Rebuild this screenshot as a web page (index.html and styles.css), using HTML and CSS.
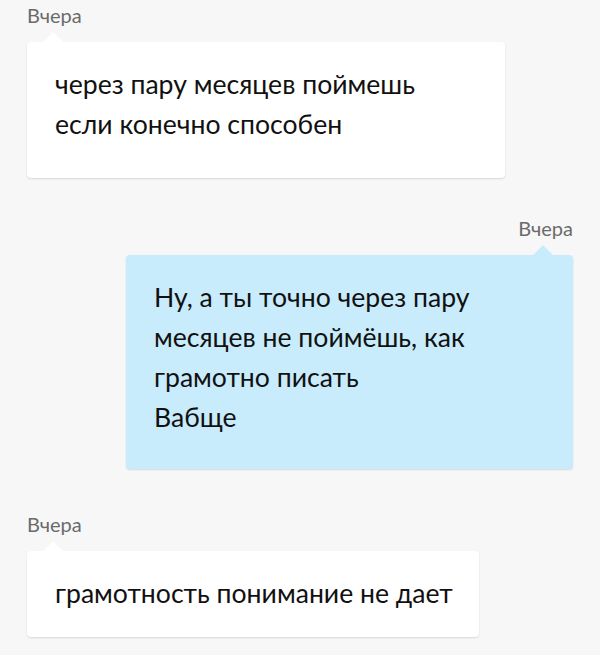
FILE: index.html
```html
<!DOCTYPE html>
<html lang="ru">
<head>
    <meta charset="UTF-8">
    <meta name="viewport" content="width=device-width, initial-scale=1.0">
    <title>Сообщения</title>
    <link rel="stylesheet" href="styles.css">
</head>
<body>
    <div class="chat">
        <div class="message incoming first">
            <div class="time">Вчера</div>
            <div class="bubble">через пару месяцев поймешь<br>если конечно способен</div>
        </div>

        <div class="message outgoing">
            <div class="time">Вчера</div>
            <div class="bubble">Ну, а ты точно через пару месяцев не поймёшь, как грамотно писать<br>Вабще</div>
        </div>

        <div class="message incoming last">
            <div class="time">Вчера</div>
            <div class="bubble">грамотность понимание не дает</div>
        </div>
    </div>
</body>
</html>
```

FILE: styles.css
```css
body {
    margin: 0;
    padding: 3px 27px 0;
    background-color: #f7f7f7;
    font-family: 'Lato', 'Open Sans', sans-serif;
    color: #111;
}
.chat {
    display: flex;
    flex-direction: column;
}
.message {
    display: flex;
    flex-direction: column;
    margin-bottom: 38px;
}
.message.outgoing {
    align-items: flex-end;
    margin-bottom: 43px;
}
.message.incoming {
    align-items: flex-start;
}
.time {
    font-size: 20px;
    line-height: 24px;
    color: #6b6b6b;
    margin-bottom: 15px;
}
.bubble {
    position: relative;
    box-sizing: border-box;
    background-color: white;
    padding: 22px 24px 34px 28px;
    border-radius: 4px;
    box-shadow: 0 1px 2px rgba(0,0,0,0.13);
    font-size: 26.6px;
    line-height: 40px;
}
.bubble:before {
    position: absolute;
    content: "";
    top: -10px;
    left: 16px;
    border-left: 10px solid transparent;
    border-right: 10px solid transparent;
    border-bottom: 10px solid white;
}
.first .bubble {
    width: 478px;
}
.outgoing .bubble {
    width: 447px;
    background-color: #c8ecfb;
    padding-bottom: 32px;
}
.outgoing .bubble:before {
    left: auto;
    right: 20px;
    border-bottom-color: #c8ecfb;
}
.last .bubble {
    width: 452px;
    padding-bottom: 24px;
}
```
